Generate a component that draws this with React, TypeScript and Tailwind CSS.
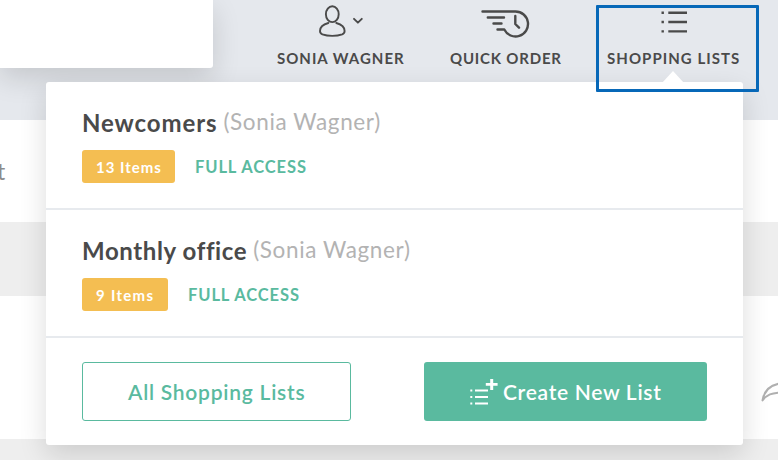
import React from "react";

function UserIcon() {
  return (
    <svg width="46" height="40" viewBox="0 0 46 40" fill="none" stroke="#4a4a4a" strokeWidth="1.900" strokeLinecap="round" strokeLinejoin="round">
      <ellipse cx="14.300" cy="14.200" rx="6.400" ry="7.900" />
      <path d="M10.300 23C5.500 24.300 2 26.500 2 31c0 2.200.4 2.600 2.400 3.400 5.600 2 14.200 2 19.800 0 2-.8 2.400-1.200 2.400-3.400 0-4.500-3.500-6.700-8.300-8" />
      <path d="M36 18.800l3.900 3.900 3.900-3.900" />
    </svg>
  );
}

function QuickOrderIcon() {
  return (
    <svg width="52" height="30" viewBox="0 0 52 30" fill="none" stroke="#4a4a4a" strokeWidth="2.400" strokeLinecap="round" strokeLinejoin="round">
      <path d="M3.500 2.500H36.500A12.500 12.500 0 1 1 25.300 20.500H18.500" />
      <path d="M8.800 8.500H25M14.500 14.500H22.500M36.300 7v8l3.700 3.700" />
    </svg>
  );
}

function ListIcon() {
  return (
    <svg width="28" height="24" viewBox="0 0 28 24" fill="#4a4a4a">
      <path d="M1.500 .5h2.400v2.400H1.500zM8.300 .5h18.700v2.400H8.300zM1.500 9.800h2.400v2.400H1.500zM8.300 9.800h18.700v2.400H8.300zM1.500 19.200h2.400v2.400H1.500zM8.300 19.200h18.700v2.400H8.300z" />
    </svg>
  );
}

function NewListIcon() {
  return (
    <svg width="28" height="28" viewBox="0 0 28 28" fill="#fff" className="shrink-0">
      <path d="M.3 11.500h2v2h-2zM5 11.500h13v2H5zM.3 18h2v2h-2zM5 18h13v2H5zM.3 24.500h2v2h-2zM5 24.500h13v2H5z" />
      <path d="M15.800 4.900h4.400V.9h3v4h4.400v2.800h-4.400v4.400h-3V7.700h-4.400z" />
    </svg>
  );
}

type ListRowProps = { title: React.ReactNode; owner: React.ReactNode; count: React.ReactNode; badge: string };

function ListRow({ title, owner, count, badge }: ListRowProps) {
  return (
    <div className="h-32 border-b-2 border-[#e7eaee] pl-9 pt-[25px]">
      <div className="flex h-8 items-center gap-[6px] whitespace-nowrap leading-8">
        {title}
        {owner}
      </div>
      <div className="mt-[11px] flex h-[33px] items-center">
        <span className={"flex h-[33px] items-center rounded-[3px] bg-[#f4be52] pl-[14px] pt-px text-[15px] font-bold text-white whitespace-nowrap " + badge}>{count}</span>
        <span className="ml-5 whitespace-nowrap pt-[2px] text-[16.500px] font-bold tracking-[0.9px] text-[#5aba9f]">FULL ACCESS</span>
      </div>
    </div>
  );
}

export default function App() {
  return (
    <div className="relative h-[460px] w-[778px] overflow-hidden bg-white font-['Lato',sans-serif] text-[#4a4a4a]">
      <div className="flex h-[120px] bg-[#e5e8ed]">
        <div className="h-[68px] w-[213px] rounded-br-[3px] bg-white shadow-[0_10px_28px_rgba(0,0,0,0.14)]" />
        <nav className="flex text-[15px] font-bold leading-5 whitespace-nowrap">
          <div className="ml-16 flex w-[130px] flex-col">
            <div className="h-[48px] pl-[41px]"><UserIcon /></div>
            <span className="tracking-[1px]">SONIA WAGNER</span>
          </div>
          <div className="ml-[43px] flex w-[115px] flex-col">
            <div className="h-[48px] pl-[29px] pt-[9px]"><QuickOrderIcon /></div>
            <span className="tracking-[0.8px]">QUICK ORDER</span>
          </div>
          <div className="ml-[42px] flex w-[135px] flex-col">
            <div className="h-[48px] pl-[53px] pt-[11px]"><ListIcon /></div>
            <span className="tracking-[1.050px]">SHOPPING LISTS</span>
          </div>
        </nav>
      </div>
      <div className="h-[102px] pt-[37px] text-[23px] leading-7 text-[#8c8c8c]">
        <span className="-ml-[3px]">t</span>
      </div>
      <div className="h-[74px] bg-[#eeeeee]" />
      <div className="flex h-[143px] justify-end pt-[84px]">
        <svg width="18" height="24" viewBox="0 0 18 24" fill="none" stroke="#b0b0b0" strokeWidth="2" strokeLinejoin="round">
          <path d="M20 3.500C10 5 4 11 2.500 20.500 7 14.500 12 13 20 12.500" />
        </svg>
      </div>
      <div className="h-[21px] bg-[#eeeeee]" />

      <section className="absolute left-[46px] top-[82px] h-[363px] w-[697px] rounded-[3px] bg-white shadow-[0_10px_28px_rgba(0,0,0,0.14)]">
        <svg className="absolute -top-[11px] left-[616px]" width="22" height="12" viewBox="0 0 22 12" fill="#fff">
          <path d="M0 12L11 0l11 12z" />
        </svg>
        <ListRow
          title={<span className="text-[24px] font-bold tracking-[0.9px]">Newcomers</span>}
          owner={<span className="-mt-[2px] text-[22.500px] tracking-[0.630px] text-[#b3b3b3]">(Sonia Wagner)</span>}
          count={<span className="tracking-[1px]">13 Items</span>}
          badge="w-[93px]"
        />
        <ListRow
          title={<span className="text-[24px] font-bold tracking-[0.6px]">Monthly office</span>}
          owner={<span className="-mt-[2px] text-[22.500px] tracking-[0.630px] text-[#b3b3b3]">(Sonia Wagner)</span>}
          count={<span className="tracking-[1.300px]">9 Items</span>}
          badge="w-[86px]"
        />
        <div className="flex gap-[73px] pl-9 pt-6 text-[21px] font-semibold whitespace-nowrap">
          <button className="flex h-[59px] w-[269px] items-center rounded-[3px] border border-[#5aba9f] pl-[45px] pt-px text-[#5aba9f]">
            <span className="tracking-[0.75px]">All Shopping Lists</span>
          </button>
          <button className="flex h-[59px] w-[283px] items-center rounded-[3px] bg-[#5aba9f] pl-[46px] pt-px text-white">
            <NewListIcon />
            <span className="ml-[5px] tracking-[0.7px]">Create New List</span>
          </button>
        </div>
      </section>

      <div className="absolute left-[596px] top-[5px] h-[87px] w-[163px] rounded-[1px] border-[3px] border-[#0768b8]" />
    </div>
  );
}
